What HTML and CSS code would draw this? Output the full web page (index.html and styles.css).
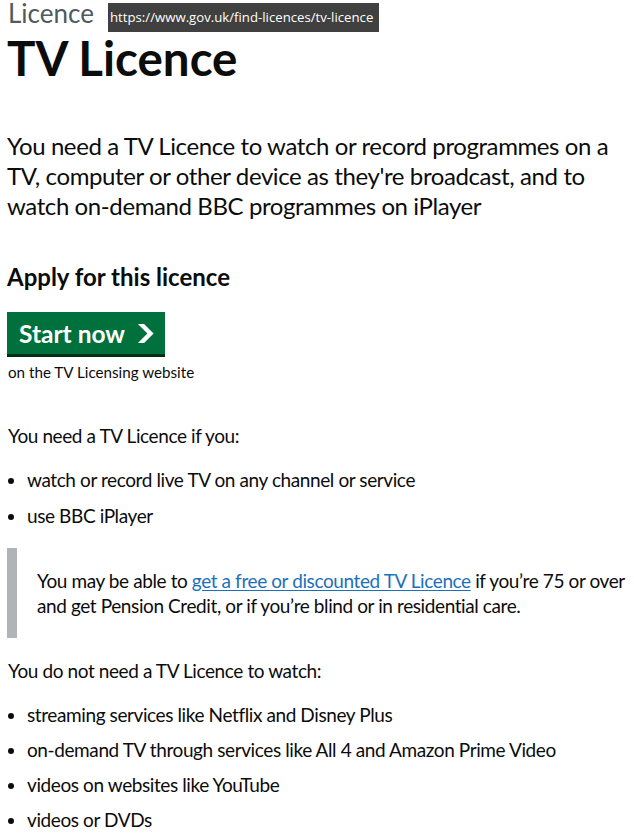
FILE: index.html
```html
<!DOCTYPE html>
<html lang="en">
<head>
    <meta charset="UTF-8">
    <meta name="viewport" content="width=device-width, initial-scale=1.0">
    <title>TV Licence - GOV.UK</title>
    <link rel="stylesheet" href="styles.css">
</head>
<body>

<main class="page">
    <span class="caption">Licence</span>
    <div class="url-tip">https://www.gov.uk/find-licences/tv-licence</div>
    <h1 class="title">TV Licence</h1>

    <p class="lead">You need a TV Licence to watch or record programmes on a TV, computer or other device as they're broadcast, and to watch on-demand BBC programmes on iPlayer</p>

    <h2 class="apply-heading">Apply for this licence</h2>
    <a class="start-button" href="#">
        Start now
        <svg class="start-icon" width="17.5" height="19" viewBox="0 0 33 40" aria-hidden="true">
            <path fill="currentColor" d="M0 0h13l20 20-20 20H0l20-20z"/>
        </svg>
    </a>
    <p class="start-note">on the TV Licensing website</p>

    <p class="body-text need">You need a TV Licence if you:</p>
    <ul class="bullets bullets-first">
        <li>watch or record live TV on any channel or service</li>
        <li>use BBC iPlayer</li>
    </ul>

    <div class="inset">
        You may be able to <a href="#">get a free or discounted TV Licence</a> if you’re 75 or over and get Pension Credit, or if you’re blind or in residential care.
    </div>

    <p class="body-text">You do not need a TV Licence to watch:</p>
    <ul class="bullets">
        <li>streaming services like Netflix and Disney Plus</li>
        <li>on-demand TV through services like All 4 and Amazon Prime Video</li>
        <li>videos on websites like YouTube</li>
        <li>videos or DVDs</li>
    </ul>
</main>

</body>
</html>
```

FILE: styles.css
```css
body {
    margin: 0;
    font-family: Lato, "Liberation Sans", Arial, sans-serif;
    color: #0b0c0c;
    background: #fff;
}
.page {
    position: relative;
    padding: 0 0 0 7px;
}
.caption {
    display: block;
    font-size: 26px;
    line-height: 26px;
    color: #505a5f;
    padding-left: 1px;
}
.url-tip {
    position: absolute;
    top: 3px;
    left: 108px;
    width: 271px;
    height: 29px;
    box-sizing: border-box;
    padding: 0 2px;
    background: #404040;
    color: #fff;
    font-family: "Open Sans", sans-serif;
    font-size: 13.2px;
    line-height: 29px;
    white-space: nowrap;
    overflow: hidden;
}
.title {
    margin: 4px 0 0;
    font-size: 47.5px;
    line-height: 55px;
    font-weight: 700;
}
.lead {
    margin: 46px 0 0;
    font-size: 24px;
    line-height: 30px;
    letter-spacing: -0.4px;
}
.apply-heading {
    margin: 41px 0 0;
    font-size: 24px;
    line-height: 30px;
    font-weight: 700;
}
.start-button {
    display: inline-flex;
    align-items: center;
    gap: 12px;
    margin-top: 20px;
    height: 42px;
    padding: 0 10px 0 12px;
    background: #00703c;
    box-shadow: 0 3px 0 #002d18;
    color: #fff;
    font-size: 24.5px;
    font-weight: 700;
    text-decoration: none;
}
.start-icon {
    display: block;
}
.start-note {
    margin: 8px 0 0;
    font-size: 15.2px;
    line-height: 20px;
    padding-left: 1px;
}
.body-text {
    margin: 41px 0 0;
    font-size: 19px;
    line-height: 25px;
    letter-spacing: -0.4px;
    padding-left: 1px;
}
.bullets {
    margin: 19px 0 0;
    padding-left: 20px;
    font-size: 19px;
    line-height: 25px;
    letter-spacing: -0.4px;
}
.bullets li {
    margin-bottom: 10px;
}
.bullets-first li {
    margin-bottom: 11px;
}
.bullets li:last-child {
    margin-bottom: 0;
}
.inset {
    margin: 20px 0 20px;
    padding: 20px 0 20px 20px;
    border-left: 10px solid #b1b4b6;
    font-size: 19px;
    line-height: 25px;
    letter-spacing: -0.4px;
}
.inset a {
    color: #1d70b8;
    text-decoration: underline;
    text-underline-offset: 2px;
}
.inset + .body-text {
    margin-top: 0;
}
```
